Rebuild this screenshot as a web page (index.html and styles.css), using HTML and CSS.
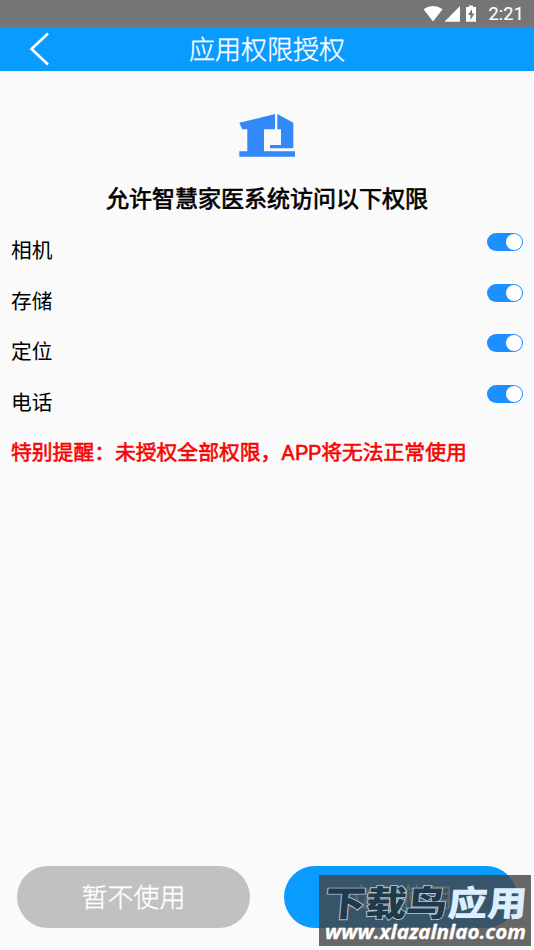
FILE: index.html
```html
<!DOCTYPE html>
<html lang="zh-CN">
<head>
<meta charset="utf-8">
<title>应用权限授权</title>
<link rel="stylesheet" href="styles.css">
</head>
<body>
<div class="screen">
  <div class="status">
    <svg class="status-icons" width="60" height="26" viewBox="0 0 60 26">
      <path d="M0.5 8.2Q10 1.8 19.6 8.2L10 20.5Z"/>
      <path d="M37 5v15.7H21.5Z"/>
      <path fill-rule="evenodd" d="M46 4.5h4V6h3v14.7H43V6h3ZM49 8l-4 6h2.5v5l4-6.500H49Z"/>
    </svg>
    <span class="clock">2:21</span>
  </div>
  <header class="bar">
    <svg class="back" width="24" height="36" viewBox="0 0 24 36"><path d="M20 3.500 3.500 19 20 34.500"/></svg>
    <h1 class="title">应用权限授权</h1>
  </header>
  <main class="content">
    <svg class="logo" width="58" height="44" viewBox="0 0 58 44">
      <path d="M1.300 8.800 37 0V15.300H26V37.300H57V42.700H1.300V37.300H9.300V15.300H4.300Z"/>
      <path d="M39.300 0 55.300 8.800V34.300H32V31H43V15.300H39.300Z"/>
    </svg>
    <h2 class="heading">允许智慧家医系统访问以下权限</h2>
    <ul class="list">
      <li class="row"><span>相机</span><i class="switch"></i></li>
      <li class="row"><span>存储</span><i class="switch"></i></li>
      <li class="row"><span>定位</span><i class="switch"></i></li>
      <li class="row"><span>电话</span><i class="switch"></i></li>
    </ul>
    <p class="warning">特别提醒：未授权全部权限，APP将无法正常使用</p>
  </main>
  <footer class="actions">
    <button class="button muted">暂不使用</button>
    <button class="button primary">立即使用</button>
  </footer>
  <div class="watermark">
    <svg width="212" height="71" viewBox="0 0 212 71">
      <g class="mark-name" transform="translate(2 41) skewX(-5) scale(1 0.9)">
        <text class="mark-dark" x="3" y="0" textLength="122" lengthAdjust="spacingAndGlyphs">下载鸟</text>
        <text class="mark-light" x="126" y="0" textLength="79" lengthAdjust="spacingAndGlyphs">应用</text>
      </g>
      <text class="mark-url" x="6" y="64" textLength="201" lengthAdjust="spacingAndGlyphs">www.xlazalnlao.com</text>
    </svg>
  </div>
</div>
</body>
</html>
```
FILE: styles.css
```css
* { box-sizing: border-box; margin: 0; padding: 0; }
body { background: #fafafa; color: #000; font-family: Roboto, "Noto Sans CJK SC", sans-serif; }
.screen { position: relative; display: flex; flex-direction: column; width: 534px; height: 950px; overflow: hidden; }
.status { display: flex; justify-content: flex-end; align-items: center; height: 27px; padding-right: 10px; background: #757575; color: #fff; }
.status-icons { width: 60px; height: 26px; margin-right: 5px; fill: #fff; }
.clock { font-size: 18px; line-height: 27px; letter-spacing: 0.2px; -webkit-text-stroke: 0.2px #fff; }
.bar { display: grid; grid-template-columns: 60px 1fr 60px; align-items: center; height: 44px; background: #0a9bff; color: #fff; }
.back { margin-left: 28px; margin-top: -4px; fill: none; stroke: #fff; stroke-width: 2.6; }
.title { padding-top: 1px; font-size: 26px; font-weight: 300; line-height: 44px; text-align: center; -webkit-text-stroke: 0.35px #fff; }
.content { flex: 1; display: flex; flex-direction: column; padding: 43px 11px 0; }
.logo { align-self: center; fill: #3388f8; }
.heading { margin-top: 25px; font-size: 23px; line-height: 34px; font-weight: 400; text-align: center; -webkit-text-stroke: 0.7px #000; }
.list { margin-top: 7px; list-style: none; }
.row { display: flex; justify-content: space-between; height: 50.5px; font-size: 20.7px; line-height: 54px; }
.switch { width: 36px; height: 18px; margin-top: 9px; padding: 1px; border-radius: 9px; background: #1e8fff; }
.switch::after { content: ""; display: block; width: 16px; height: 16px; margin-left: auto; border-radius: 50%; background: #fff; }
.warning { color: #f80404; font-size: 20.8px; line-height: 54px; white-space: nowrap; -webkit-text-stroke: 0.6px #f80404; }
.actions { display: flex; justify-content: space-between; padding: 0 17px 22px; }
.button { width: 233px; height: 62px; padding-top: 3px; border: 0; border-radius: 31px; color: #fff; font: 300 26px/59px Roboto, "Noto Sans CJK SC", sans-serif; -webkit-text-stroke: 0.35px #fff; }
.muted { background: #c1c1c1; }
.primary { background: #0a9bff; }
.watermark { position: absolute; left: 319px; top: 875px; width: 212px; height: 71px; background: rgba(66, 66, 66, 0.8); }
.watermark svg { display: block; }
.mark-name { font: 900 39px "Noto Sans CJK SC", sans-serif; paint-order: stroke; }
.mark-dark { fill: #20394b; stroke: #b4c6d2; stroke-width: 2px; }
.mark-light { fill: #dcefff; }
.mark-url { font: italic 700 20px "Open Sans", sans-serif; fill: #fff; stroke: #fff; stroke-width: 0.3px; }
```
